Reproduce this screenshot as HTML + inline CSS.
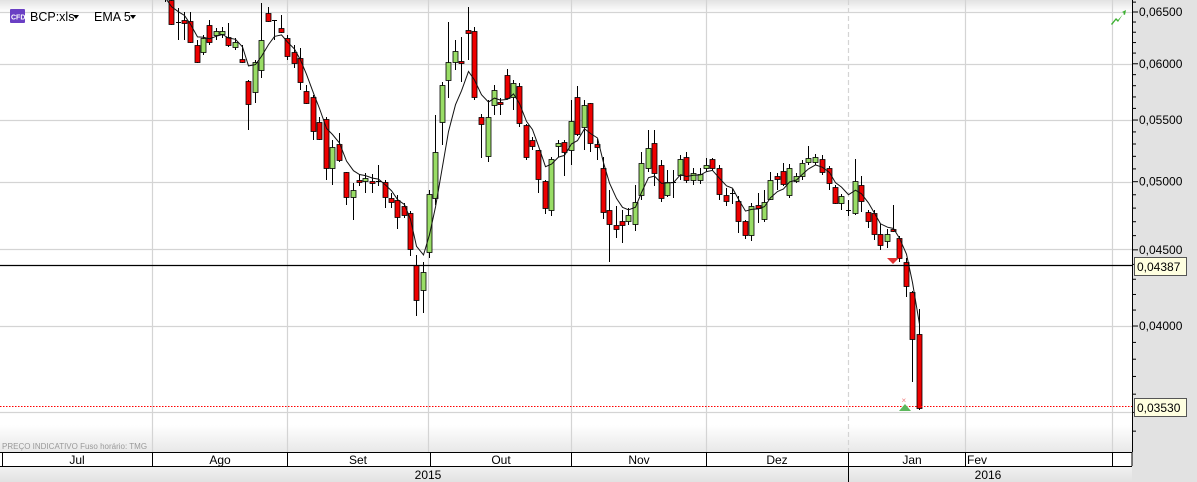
<!DOCTYPE html>
<html><head><meta charset="utf-8"><style>
html,body{margin:0;padding:0;width:1197px;height:482px;overflow:hidden;background:#fff;font-family:"Liberation Sans",sans-serif;}
</style></head><body>
<svg id="s" width="1197" height="482" xmlns="http://www.w3.org/2000/svg" style="position:absolute;left:0;top:0">
<defs>
<linearGradient id="tg" x1="0" y1="0" x2="0" y2="1"><stop offset="0" stop-color="#e2e2e2"/><stop offset="1" stop-color="#ffffff"/></linearGradient>
<linearGradient id="bg" x1="0" y1="0" x2="0" y2="1"><stop offset="0" stop-color="#ffffff"/><stop offset="1" stop-color="#e8e8e8"/></linearGradient>
<linearGradient id="yg" x1="0" y1="0" x2="0" y2="1"><stop offset="0" stop-color="#f2f2f2"/><stop offset="1" stop-color="#e2e2e2"/></linearGradient>
</defs>
<rect x="0" y="0" width="1132" height="452" fill="#fff"/>
<rect x="0" y="0" width="1132" height="12" fill="url(#tg)"/>
<rect x="0" y="425" width="1132" height="27" fill="url(#bg)"/>
<rect x="1132" y="0" width="65" height="482" fill="#e2e2e2"/>
<g id="grid" stroke="#d4d4d4" stroke-width="1.2"></g>
<g id="cand"></g>
<polyline id="ema" fill="none" stroke="#111" stroke-width="1"/>
<line x1="0" y1="265.5" x2="1132" y2="265.5" stroke="#000" stroke-width="1.2"/>
<line x1="0" y1="406.5" x2="1132" y2="406.5" stroke="#f00" stroke-width="1" stroke-dasharray="1.5,1.5"/>
<polygon points="887,258 899,258 893,264" fill="#e03030"/>
<polygon points="899,411 911,411 905,404" fill="#5cb85c"/>
<text x="901.5" y="403" font-size="8" fill="#f08080">×</text>
<path d="M1111,24 L1116,18 L1118,20 L1124,13 L1122,12 L1126,10 L1125,15 L1123,14 L1118,22 L1116,20 L1112,25Z" fill="#3cb030"/>
<line x1="1132.5" y1="0" x2="1132.5" y2="452" stroke="#000"/>
<g id="ax" font-size="12" fill="#000"></g>
<rect x="1134.5" y="257.5" width="52" height="18" fill="#ffffe0" stroke="#555"/>
<text x="1137" y="271" font-size="12">0,04387</text>
<rect x="1134.5" y="398.5" width="52" height="18" fill="#ffffe0" stroke="#555"/>
<text x="1137" y="412" font-size="12">0,03530</text>
<text x="2" y="449" font-size="8" fill="#999">PREÇO INDICATIVO   Fuso horário: TMG</text>
<rect x="0" y="452" width="1132" height="14" fill="#fff"/>
<rect x="0" y="466" width="1132" height="16" fill="url(#yg)"/>
<line x1="0" y1="452.5" x2="1132" y2="452.5" stroke="#000"/>
<line x1="0" y1="466.5" x2="1132" y2="466.5" stroke="#000"/>
<g id="mo" font-size="12" fill="#000"></g>
<text x="428" y="479" font-size="12" text-anchor="middle">2015</text>
<text x="988" y="479" font-size="12" text-anchor="middle">2016</text>
<line x1="848.5" y1="466" x2="848.5" y2="482" stroke="#000"/>
<g font-size="12.5" fill="#000">
<rect x="10" y="9" width="15" height="14" fill="#6a3fc4" rx="1"/>
<text x="11" y="19.5" font-size="7" fill="#fff" font-weight="bold">CFD</text>
<text x="30" y="21">BCP:xls</text>
<polygon points="73,15 79,15 76,19" fill="#000"/>
<text x="94" y="21">EMA 5</text>
<polygon points="130,15 136,15 133,19" fill="#000"/>
</g>
</svg>
<script>
var NS="http://www.w3.org/2000/svg";
function el(p,t,a,txt){var e=document.createElementNS(NS,t);for(var k in a)e.setAttribute(k,a[k]);if(txt)e.textContent=txt;document.getElementById(p).appendChild(e);return e;}
function Y(p){return 12+646.8*Math.log(0.065/p);}
[12,64,120,182,249,326,412].forEach(function(y){el("grid","line",{x1:0,y1:y+.5,x2:1132,y2:y+.5});});
[152,287,428,571,706,965,1112].forEach(function(x){el("grid","line",{x1:x+.5,y1:0,x2:x+.5,y2:452});});
el("grid","line",{x1:848.5,y1:0,x2:848.5,y2:452,"stroke-dasharray":"5,3"});
for(var v=34;v<=66;v++){var p=v/1000,y=Y(p);if(y<0||y>452)continue;var maj=(v%5==0);
el("ax","line",{x1:1132,y1:y,x2:maj?1138:1136,y2:y,stroke:"#000"});
if(maj&&v!=35)el("ax","text",{x:1139,y:y+4},"0,0"+(v*100).toString().slice(0,4).padEnd(4,"0"));}
var ms=[[2,152,"Jul",77],[152,287,"Ago",220],[287,430,"Set",358],[430,571,"Out",501],[571,706,"Nov",639],[706,848,"Dez",777],[848,965,"Jan",912],[965,1112,"Fev",977],[1112,1132,"",0]];
ms.forEach(function(m){el("mo","line",{x1:m[0]+.5,y1:452,x2:m[0]+.5,y2:466,stroke:"#000"});
if(m[2])el("mo","text",{x:m[3],y:464,"text-anchor":"middle"},m[2]);});
el("mo","line",{x1:1132,y1:452,x2:1132,y2:466,stroke:"#000"});
var C=[[165,-10,-2,-12,2],[171,0,24,-5,25],[178,22,22,8,40],[184,20,23,12,40],[190,21,42,12,43],[197,45,62,40,63],[203,52,38,35,55],[209,25,42,20,45],[216,35,31,28,40],[222,34,31,27,38],[228,37,45,23,47],[235,47,42,38,50],[242,59,62,45,63],[248,81,104,80,130],[255,92,62,60,103],[261,70,40,3,78],[268,13,21,7,22],[274,20,20,20,40],[281,28,32,15,33],[287,38,56,35,60],[294,52,63,45,68],[300,58,82,48,90],[306,91,103,85,104],[313,97,131,95,140],[319,122,139,117,140],[326,119,168,117,180],[332,168,147,140,185],[339,144,160,133,162],[346,172,197,172,205],[353,197,190,183,220],[359,180,182,174,186],[365,181,178,173,193],[372,181,183,174,193],[378,181,181,165,186],[385,182,197,180,208],[391,198,202,193,208],[397,200,217,195,229],[404,206,215,203,218],[410,213,249,211,256],[416,265,300,255,316],[423,290,272,262,313],[429,252,194,190,258],[435,198,152,115,205],[442,122,85,82,145],[448,80,62,22,98],[455,62,51,40,70],[461,61,63,37,82],[468,30,33,7,60],[474,31,97,27,100],[481,117,124,114,158],[488,156,117,100,162],[494,105,90,85,115],[500,102,104,98,115],[507,75,98,69,99],[513,97,83,80,110],[519,86,123,83,127],[526,125,157,124,160],[532,140,146,137,150],[538,150,179,150,193],[545,181,208,180,214],[551,210,159,157,216],[558,146,143,140,157],[564,142,152,140,176],[571,150,121,100,165],[577,97,134,86,136],[584,127,105,100,150],[590,103,143,103,152],[597,144,147,139,160],[603,168,212,157,219],[609,210,224,190,262],[616,225,229,206,238],[622,221,225,210,243],[628,221,215,208,225],[635,224,202,185,231],[641,195,163,152,200],[648,168,148,130,172],[654,143,173,130,186],[661,165,198,160,202],[667,195,182,170,197],[673,182,182,170,198],[680,175,159,155,180],[686,157,180,152,183],[693,180,173,168,185],[700,180,174,168,184],[706,168,165,158,172],[712,159,168,158,170],[719,168,194,165,200],[726,195,201,188,206],[732,193,193,189,204],[738,201,221,196,233],[745,221,235,220,239],[751,235,206,203,241],[758,205,208,193,223],[764,219,202,190,222],[770,199,180,172,200],[777,176,179,173,190],[783,171,184,163,186],[789,195,168,164,198],[796,181,176,173,183],[802,176,163,160,180],[808,162,158,146,165],[815,162,157,154,165],[822,159,172,155,175],[829,168,183,166,190],[835,187,203,185,204],[841,203,196,194,210],[848,210,210,200,216],[855,213,181,159,215],[861,185,201,176,212],[868,212,221,210,228],[874,213,234,210,240],[880,234,245,224,250],[887,241,234,229,248],[893,229,231,205,232],[899,238,258,236,262],[906,262,286,258,297],[912,292,339,291,382],[919,334,408,309,410]];
var ema=null,pts=[];
C.forEach(function(c){var x=c[0],o=c[1],cl=c[2],red=cl>=o;var top=Math.min(o,cl),bot=Math.max(o,cl);
el("cand","line",{x1:x+.5,y1:c[3],x2:x+.5,y2:c[4],stroke:"#000","stroke-width":1});
if(bot-top<1.5){el("cand","line",{x1:x-2,y1:top+.5,x2:x+3,y2:top+.5,stroke:"#000"});}
else el("cand","rect",{x:x-2,y:top+.5,width:5,height:bot-top,fill:red?"#ee0000":"#99dd66",stroke:"#000","stroke-width":0.8});
ema=ema===null?cl:ema+(cl-ema)/3;pts.push((x+.5)+","+ema.toFixed(1));});
document.getElementById("ema").setAttribute("points",pts.join(" "));
</script>
</body></html>
